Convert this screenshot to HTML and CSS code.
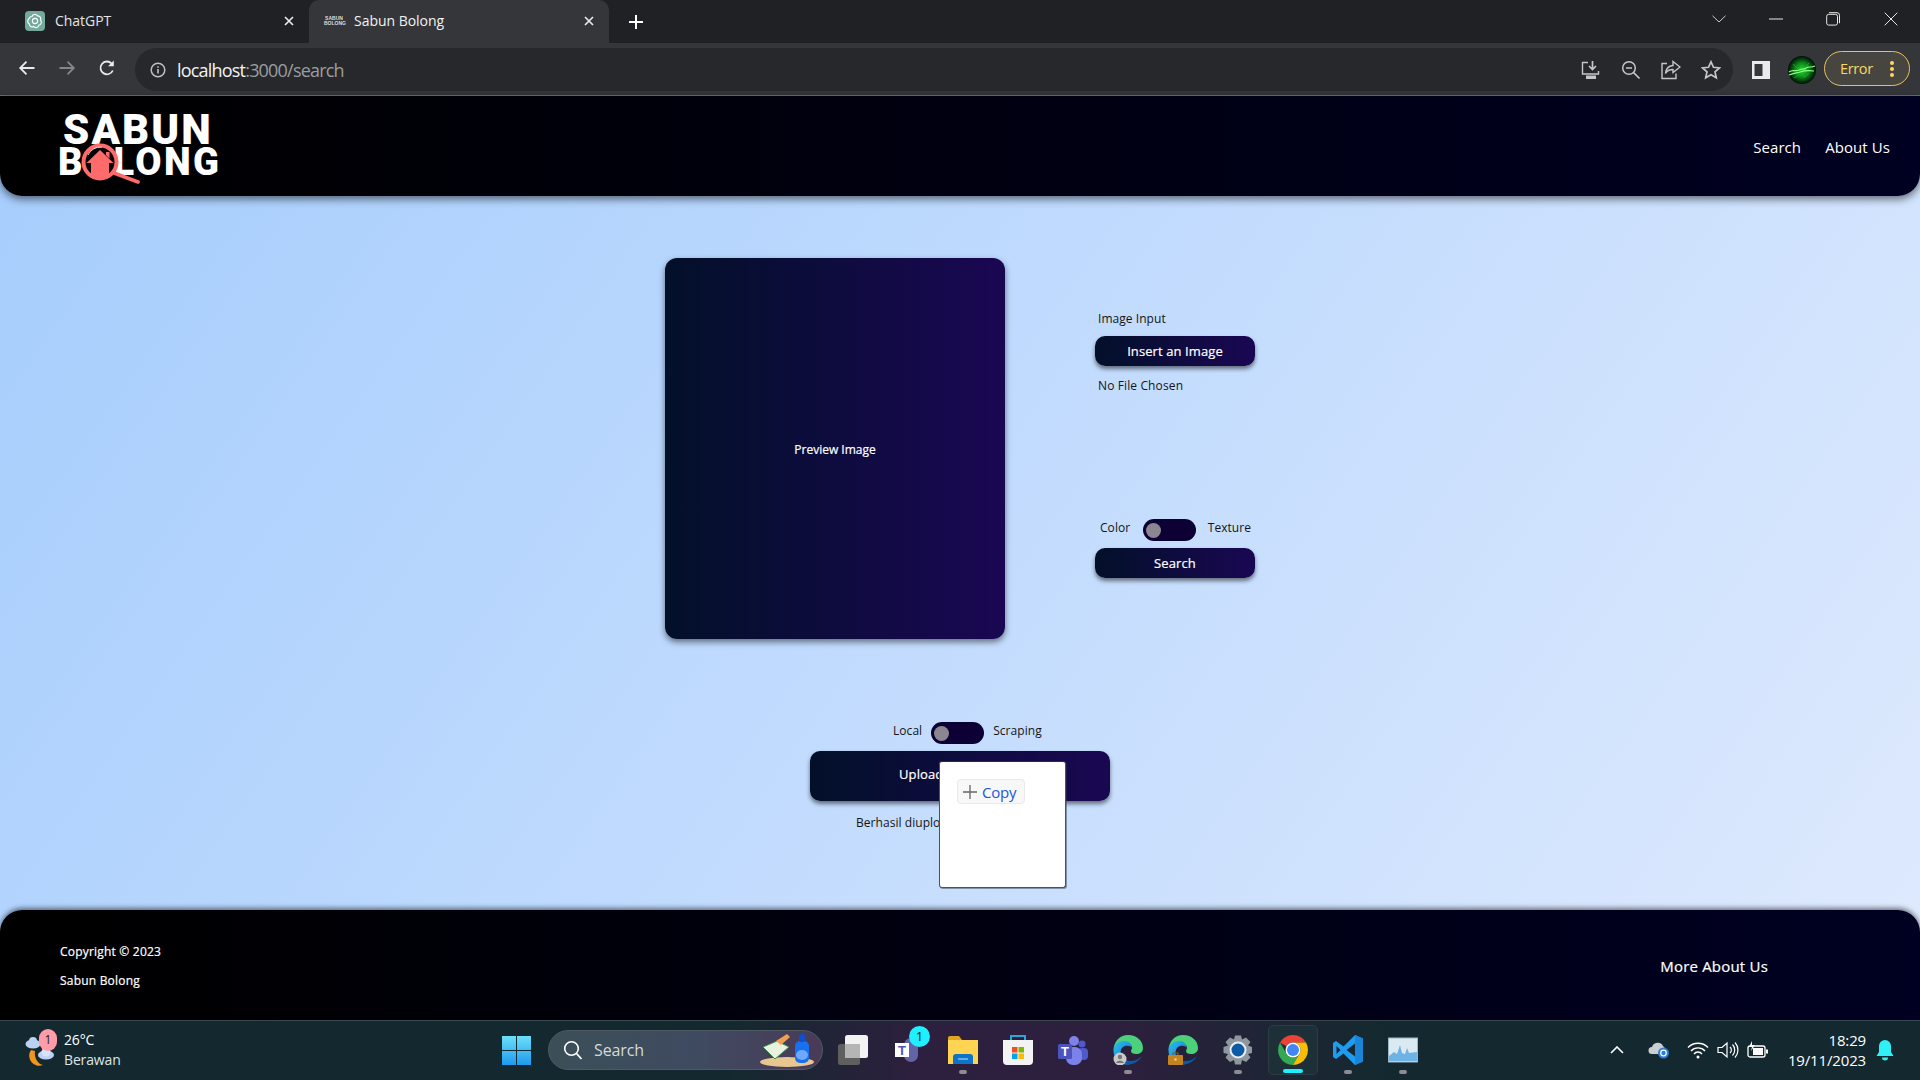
FILE: index.html
```html
<!DOCTYPE html>
<html lang="en">
<head>
<meta charset="utf-8">
<title>Sabun Bolong</title>
<link rel="stylesheet" href="styles.css">
</head>
<body>
<div class="tabstrip">
  <div class="tab">
    <svg class="fav" viewBox="0 0 20 20"><rect width="20" height="20" rx="4" fill="#74aa9c"/><g fill="none" stroke="#fff" stroke-width="1.1"><circle cx="10" cy="10" r="2.6"/><path d="M7 5.5a3 3 0 0 1 5.5-.6 3 3 0 0 1 3 4.3 3 3 0 0 1-1.5 5 3 3 0 0 1-5.3 1.2 3 3 0 0 1-4.5-2.600 3 3 0 0 1-.2-5 3 3 0 0 1 3-2.300z"/></g></svg>
    <span class="tab-title">ChatGPT</span>
    <svg class="tab-x" viewBox="0 0 10 10"><path d="M1 1l8 8M9 1l-8 8" stroke="#e8eaed" stroke-width="1.700"/></svg>
  </div>
  <div class="tab tab-active">
    <span class="mini-logo">SABUN BOLONG</span>
    <span class="tab-title">Sabun Bolong</span>
    <svg class="tab-x" viewBox="0 0 10 10"><path d="M1 1l8 8M9 1l-8 8" stroke="#e8eaed" stroke-width="1.700"/></svg>
  </div>
  <svg class="tab-plus" viewBox="0 0 16 16"><path d="M8 1v14M1 8h14" stroke="#fff" stroke-width="2"/></svg>
  <div class="win-controls">
    <svg class="win-chev" viewBox="0 0 14 8"><path d="M.5.8L7 7l6.500-6.200" fill="none" stroke="#c8c9cb" stroke-width="1"/></svg>
    <svg class="win-min" viewBox="0 0 14 2"><path d="M0 1h14" stroke="#e8e8e8" stroke-width="1"/></svg>
    <svg class="win-max" viewBox="0 0 14 14"><rect x=".7" y="2.300" width="10.800" height="10.800" rx="2" fill="none" stroke="#e8e8e8" stroke-width="1"/><path d="M3 .7h8a2.500 2.500 0 0 1 2.500 2.500v8" fill="none" stroke="#e8e8e8" stroke-width="1"/></svg>
    <svg class="win-close" viewBox="0 0 14 14"><path d="M.7.7l12.600 12.600M13.300.7L.7 13.300" stroke="#e8e8e8" stroke-width="1"/></svg>
  </div>
</div>
<div class="toolbar">
  <svg class="nav-ic" viewBox="0 0 18 18"><path d="M16.500 9H2.500M8.500 2.700L2.200 9l6.300 6.300" fill="none" stroke="#e8eaed" stroke-width="1.800"/></svg>
  <svg class="nav-ic" viewBox="0 0 18 18"><path d="M1.500 9h14M9.500 2.700L15.800 9l-6.300 6.300" fill="none" stroke="#84868a" stroke-width="1.800"/></svg>
  <svg class="nav-ic" viewBox="0 0 18 18"><path d="M14.800 11.500A6.400 6.400 0 1 1 13.500 4.400" fill="none" stroke="#e8eaed" stroke-width="1.800"/><path d="M15.800 1.500v5.700h-5.700z" fill="#e8eaed"/></svg>
  <div class="omnibox">
    <svg class="info" viewBox="0 0 16 16"><circle cx="8" cy="8" r="6.800" fill="none" stroke="#bdc1c6" stroke-width="1.500"/><path d="M8 7v4.500M8 4.300v1.500" stroke="#bdc1c6" stroke-width="1.600"/></svg>
    <span class="url"><span class="url-host">localhost</span>:3000/search</span>
    <div class="omni-icons">
      <svg class="omni-ic" viewBox="0 0 20 20"><path d="M7 2.500H1.500v11.500h16v-3" fill="none" stroke="#c4c7c9" stroke-width="1.400"/><path d="M11.500 1v7.500M8 6l3.500 3.500L15 6" fill="none" stroke="#c4c7c9" stroke-width="1.700"/><path d="M5 15.500h10V19H5z" fill="#c4c7c9"/></svg>
      <svg class="omni-ic" viewBox="0 0 20 20"><circle cx="8" cy="8" r="6.300" fill="none" stroke="#c4c7c9" stroke-width="1.500"/><path d="M5 8h6M12.500 12.500l6 6" stroke="#c4c7c9" stroke-width="1.700"/></svg>
      <svg class="omni-ic" viewBox="0 0 20 20"><path d="M6 3.500H1v15h14v-5" fill="none" stroke="#c4c7c9" stroke-width="1.400"/><path d="M12 1.500l7 5.500-7 5.500V9.500c-3.500 0-6 1-7.500 4 .3-4.500 3-7.500 7.500-8z" fill="none" stroke="#c4c7c9" stroke-width="1.400"/></svg>
      <svg class="omni-ic" viewBox="0 0 20 20"><path d="M10 1.800l2.500 5.500 6 .6-4.500 4 1.300 5.900L10 14.800l-5.300 3 1.300-5.900-4.500-4 6-.6z" fill="none" stroke="#c4c7c9" stroke-width="1.700"/></svg>
    </div>
  </div>
  <svg class="panel-ic" viewBox="0 0 18 18"><rect width="18" height="18" fill="#e8eaed"/><rect x="2.500" y="3" width="8" height="12" fill="#35363a"/></svg>
  <svg class="avatar" viewBox="0 0 28 28"><defs><radialGradient id="ag"><stop offset="0" stop-color="#2bd634"/><stop offset=".5" stop-color="#0d8a18"/><stop offset=".85" stop-color="#04300c"/><stop offset="1" stop-color="#011006"/></radialGradient></defs><circle cx="14" cy="14" r="14" fill="url(#ag)"/><path d="M1 16c4-3 6 0 10-2s5 0 7-2 5 0 9-2M1 19c5-2 8-2 11-3s7-2 14-1" fill="none" stroke="#8dff86" stroke-width="1.200"/><path d="M5 8l5 5 4-4 3 3 4-5M6 22l6-4 5 3 4-4" fill="none" stroke="#1fae2a" stroke-width=".8"/></svg>
  <div class="error-pill"><span>Error</span><svg class="error-dots" viewBox="0 0 4 16"><circle cx="2" cy="2" r="2" fill="#fdd663"/><circle cx="2" cy="8" r="2" fill="#fdd663"/><circle cx="2" cy="14" r="2" fill="#fdd663"/></svg></div>
</div>
<div class="page">
  <header class="site-header">
    <div class="logo">SABUN BOLONG
      <svg class="logo-mag" viewBox="0 0 60 42"><path d="M33 31l24 9" stroke="#ff6b6b" stroke-width="3.600" stroke-linecap="round"/><circle cx="19" cy="20" r="16.500" fill="#050505" stroke="#ff6b6b" stroke-width="4"/><path d="M19 8L5.500 21H10v14h18V21h4.500z" fill="#ff6b6b"/><path d="M25 10h3.500v6.500L25 13z" fill="#ff6b6b"/><path d="M7 13a14 14 0 0 1 14-8" fill="none" stroke="#fff" stroke-width=".8"/></svg>
    </div>
    <nav class="site-nav"><a>Search</a><a>About Us</a></nav>
  </header>
  <main class="content">
    <section class="search-row">
      <div class="preview"><span class="preview-text">Preview Image</span></div>
      <div class="controls">
        <div class="ctrl-group">
          <span class="label label-in">Image Input</span>
          <button class="btn">Insert an Image</button>
          <span class="label label-file">No File Chosen</span>
        </div>
        <div class="ctrl-group">
          <div class="toggle-row toggle-row-search"><span class="label">Color</span><span class="toggle"><span class="knob"></span></span><span class="label">Texture</span></div>
          <button class="btn">Search</button>
        </div>
      </div>
    </section>
    <section class="upload">
      <div class="toggle-row toggle-row-upload"><span class="label">Local</span><span class="toggle"><span class="knob"></span></span><span class="label">Scraping</span></div>
      <button class="btn btn-wide">Upload to Database</button>
      <span class="label upload-status">Berhasil diupload ke database</span>
      <div class="popup">
        <div class="copy-chip"><svg class="copy-plus" viewBox="0 0 14 14"><path d="M7 0v14M0 7h14" stroke="#666" stroke-width="1.300"/></svg><span>Copy</span></div>
      </div>
    </section>
  </main>
  <footer class="site-footer">
    <div class="foot-left"><span>Copyright © 2023</span><span>Sabun Bolong</span></div>
    <a class="foot-link">More About Us</a>
  </footer>
</div>
<div class="taskbar">
  <div class="tb-left">
    <div class="weather">
      <svg class="weather-ic" viewBox="0 0 30 30"><path d="M6 14a10 10 0 0 0 12 15c-5-1-9-7-8-14z" fill="#f0961e"/><ellipse cx="8" cy="8" rx="7.500" ry="4.500" fill="#bcd2f2"/><circle cx="8" cy="5" r="4" fill="#bcd2f2"/><ellipse cx="21" cy="19" rx="8" ry="4.500" fill="#bcd2f2"/><circle cx="21" cy="16" r="4.500" fill="#d7e4f8"/></svg>
      <span class="weather-badge">1</span>
      <div class="weather-text"><span class="w-temp">26°C</span><span>Berawan</span></div>
    </div>
  </div>
  <div class="tb-center">
    <div class="tb-item tb-win">
      <svg class="ic-29" viewBox="0 0 29 29"><defs><linearGradient id="wg" x1="0" y1="0" x2="0" y2="1"><stop offset="0" stop-color="#6ce0f8"/><stop offset="1" stop-color="#1d9af0"/></linearGradient></defs><path d="M0 0h14v14H0zM15 0h14v14H15zM0 15h14v14H0zM15 15h14v14H15z" fill="url(#wg)"/></svg>
    </div>
    <div class="tb-search">
      <svg class="q-ic" viewBox="0 0 20 20"><circle cx="8.500" cy="8.500" r="6.800" fill="none" stroke="#fff" stroke-width="1.600"/><path d="M13.500 13.500l5 5.500" stroke="#fff" stroke-width="1.800"/></svg>
      <span class="q-text">Search</span>
      <svg class="q-art" viewBox="0 0 56 34"><ellipse cx="28" cy="29" rx="27" ry="5" fill="#e8c690"/><path d="M4 14l14-6 12 6-14 12z" fill="#e8f2dc" stroke="#3d8a55"/><path d="M17 8l11-7 3 3-9 8z" fill="#f0a050"/><rect x="36" y="8" width="14" height="22" rx="5" fill="#1670f0"/><rect x="40" y="1" width="6" height="8" rx="2" fill="#0f50c8"/><ellipse cx="43" cy="22" rx="6" ry="5" fill="#6fa8ff"/></svg>
    </div>
    <div class="tb-item">
      <svg class="ic-30" viewBox="0 0 30 30"><rect x="0" y="9" width="22" height="21" rx="2.500" fill="#5f5f5f"/><rect x="7" y="0" width="23" height="23" rx="2.500" fill="#f2f2f2"/><rect x="7" y="9" width="15" height="14" fill="#b5b5b5"/></svg>
    </div>
    <div class="tb-item">
      <svg class="ic-30" viewBox="0 0 30 30"><rect x="11" y="3" width="14" height="24" rx="7" fill="#6264a7"/><rect x="2" y="8" width="14" height="14" fill="#fff"/><text class="t-letter" x="9" y="19.500" text-anchor="middle">T</text></svg>
      <span class="tb-count">1</span>
    </div>
    <div class="tb-item has-dot">
      <svg class="ic-30" viewBox="0 0 30 30"><path d="M0 3a2 2 0 0 1 2-2h9l3 4h-14z" fill="#e0a422"/><path d="M0 5h30v24H0z" fill="#ffd452"/><path d="M5 22a3 3 0 0 1 3-3h14a3 3 0 0 1 3 3v7H5z" fill="#0f74c8"/><path d="M10 24h10" stroke="#9fd0f5" stroke-width="1.200"/></svg>
    </div>
    <div class="tb-item">
      <svg class="ic-30" viewBox="0 0 30 30"><path d="M8 6V1h14v5" fill="none" stroke="#22a9e0" stroke-width="2"/><path d="M0 5h30v21a4 4 0 0 1-4 4H4a4 4 0 0 1-4-4z" fill="#f3f3f3"/><rect x="9" y="12" width="5.500" height="5.500" fill="#f25022"/><rect x="15.500" y="12" width="5.500" height="5.500" fill="#7fba00"/><rect x="9" y="18.500" width="5.500" height="5.500" fill="#00a4ef"/><rect x="15.500" y="18.500" width="5.500" height="5.500" fill="#ffb900"/></svg>
    </div>
    <div class="tb-item">
      <svg class="ic-30" viewBox="0 0 30 30"><circle cx="24" cy="9" r="3.500" fill="#5059c9"/><rect x="20" y="13" width="10" height="12" rx="4" fill="#5059c9"/><circle cx="16" cy="6" r="5" fill="#7b83eb"/><rect x="8" y="12" width="16" height="18" rx="7" fill="#7b83eb"/><rect x="0" y="9" width="14" height="15" rx="1.500" fill="#4b53bc"/><text class="t-letter t-letter-w" x="7" y="21" text-anchor="middle">T</text></svg>
    </div>
    <div class="tb-item has-dot">
      <svg class="ic-30" viewBox="0 0 30 30"><defs><linearGradient id="eg" x1="0" y1="0" x2="1" y2="1"><stop offset="0" stop-color="#28c0e8"/><stop offset=".6" stop-color="#1f8fe0"/><stop offset="1" stop-color="#0b5aa8"/></linearGradient></defs><path d="M15 0c9 0 15 6 15 13 0 4-3 6-7 6-3 0-5-1-5-3 0-1 1-2 1-3 0-3-3-6-8-6C6 7 2 11 .5 14 1.500 6 7 0 15 0z" fill="#4cd07a"/><path d="M.5 14C2 9 6 6 11 6c5 0 7.500 3 7.500 6-5-3-11-1-11 6 0 5 4 10 10 11.500C7 31 0 24 .5 14z" fill="url(#eg)"/><path d="M29 21c-3 5-8 9-14 8-4-1-7-5-7-10 0 5 5 7 10 7 4 0 8-2 11-5z" fill="#0c59a4"/><circle cx="7" cy="24" r="6.500" fill="#c9c9c9"/><circle cx="7" cy="22" r="2.200" fill="#777"/><path d="M2.800 28a4.500 4 0 0 1 8.400 0z" fill="#777"/></svg>
    </div>
    <div class="tb-item">
      <svg class="ic-30" viewBox="0 0 30 30"><path d="M15 0c9 0 15 6 15 13 0 4-3 6-7 6-3 0-5-1-5-3 0-1 1-2 1-3 0-3-3-6-8-6C6 7 2 11 .5 14 1.500 6 7 0 15 0z" fill="#4cd07a"/><path d="M.5 14C2 9 6 6 11 6c5 0 7.500 3 7.500 6-5-3-11-1-11 6 0 5 4 10 10 11.500C7 31 0 24 .5 14z" fill="url(#eg)"/><path d="M29 21c-3 5-8 9-14 8-4-1-7-5-7-10 0 5 5 7 10 7 4 0 8-2 11-5z" fill="#0c59a4"/><rect x="0" y="20" width="15" height="10" rx="1" fill="#c68420"/><path d="M5 20v-2h5v2" fill="none" stroke="#8a5a15" stroke-width="1.200"/><rect x="6.500" y="23.500" width="2" height="2" fill="#ffe082"/></svg>
    </div>
    <div class="tb-item has-dot">
      <svg class="ic-30" viewBox="0 0 30 30"><path d="M12 .5h6l1 4 4-2 4.500 4.500-2.500 3.500 4 1.500v6l-4 1 2.500 3.500L23 27l-4-2-1 4.500h-6l-1-4.500-4 2L2.500 22.500 5 19l-4.500-1v-6L5 10.500 2.500 7 7 2.500l4 2z" fill="#8f979e"/><circle cx="15" cy="15" r="7.500" fill="#0e5aa6" stroke="#e8edf2" stroke-width="2"/></svg>
    </div>
    <div class="tb-item tb-active">
      <svg class="ic-30" viewBox="4 4 40 40"><path d="M24 4A20 20 0 0 1 41.320 14H24a10 10 0 0 0-8.660 5L6.680 14A20 20 0 0 1 24 4z" fill="#ea4335"/><path d="M6.680 14A20 20 0 0 0 24 44L32.660 29A10 10 0 0 1 15.340 29z" fill="#34a853"/><path d="M41.320 14H24a10 10 0 0 1 8.660 15L24 44A20 20 0 0 0 41.320 14z" fill="#fbbc04"/><circle cx="24" cy="24" r="10" fill="#fff"/><circle cx="24" cy="24" r="8" fill="#4285f4"/></svg>
      <span class="tb-bar"></span>
    </div>
    <div class="tb-item has-dot">
      <svg class="ic-30" viewBox="0 0 30 30"><path d="M22 0l-11.500 11.500L3 6 0 8v14l3 2 7.500-5.500L22 30l8-3.500v-23zM22 8.500v13L13.500 15zM3.500 11l4 4-4 4z" fill="#1f9cf0" fill-rule="evenodd"/><path d="M22 0l8 3.500v23L22 30z" fill="#1a85d8"/></svg>
    </div>
    <div class="tb-item has-dot">
      <svg class="ic-30" viewBox="0 0 30 30"><rect x=".5" y="3" width="29" height="24" fill="#dbe9f2" stroke="#9db4c2"/><path d="M1 21l5-4 3 2 3-9 2 8 3 1 2-6 2 5 8-1v9H1z" fill="#6db3e6"/></svg>
    </div>
  </div>
  <div class="tb-right">
    <svg class="tray-chev" viewBox="0 0 14 8"><path d="M1 7l6-6 6 6" fill="none" stroke="#fff" stroke-width="1.600"/></svg>
    <svg class="tray-ic" viewBox="0 0 22 18"><path d="M4 13a3.500 3.500 0 0 1 0-7 6 6 0 0 1 11-1 4 4 0 0 1 2 4l-5 4z" fill="#c9ced1"/><circle cx="15.500" cy="12" r="5.500" fill="#2b7fd8"/><circle cx="15.500" cy="12" r="2.800" fill="none" stroke="#fff" stroke-width="1.200"/></svg>
    <svg class="tray-ic" viewBox="0 0 22 18"><path d="M1 6.500a14 14 0 0 1 20 0M4 10a9.500 9.500 0 0 1 14 0M7 13a5 5 0 0 1 8 0" fill="none" stroke="#fff" stroke-width="1.400"/><circle cx="11" cy="16" r="1.500" fill="#fff"/></svg>
    <svg class="tray-ic" viewBox="0 0 22 18"><path d="M1 6.500h4L10 2v14l-5-4.500H1z" fill="none" stroke="#fff" stroke-width="1.200"/><path d="M13 6a4 4 0 0 1 0 6M15.500 3.500a8 8 0 0 1 0 11M18 1.500a11 11 0 0 1 0 15" fill="none" stroke="#fff" stroke-width="1.200"/></svg>
    <svg class="tray-ic" viewBox="0 0 22 18"><rect x="1" y="5" width="17" height="11" rx="2" fill="none" stroke="#fff" stroke-width="1.300"/><rect x="6" y="7" width="10" height="7" fill="#fff"/><path d="M19 8.500h2v4h-2z" fill="#fff"/><path d="M5 0L2 6h3l-1 4 4-6H5z" fill="#fff"/></svg>
    <div class="clock"><span>18:29</span><span>19/11/2023</span></div>
    <svg class="bell" viewBox="0 0 18 22"><path d="M9 1a6 6 0 0 1 6 6v6l2.500 4H.5L3 13V7a6 6 0 0 1 6-6z" fill="#2ff0f5"/><path d="M6 18.500a3 3 0 0 0 6 0z" fill="#2ff0f5"/></svg>
  </div>
</div>
</body>
</html>
```

FILE: styles.css
```css
* { box-sizing: border-box; }
html, body { margin: 0; padding: 0; }
body {
  width: 1920px;
  height: 1080px;
  overflow: hidden;
  display: flex;
  flex-direction: column;
  font-family: "Open Sans", "Noto Sans", sans-serif;
  color: #111;
  background: #202124;
}
svg { display: block; flex: none; }

/* browser tabs */
.tabstrip {
  height: 43px;
  flex: none;
  display: flex;
  align-items: center;
  background: #202124;
  padding-left: 9px;
}
.tab {
  width: 300px;
  height: 43px;
  display: flex;
  align-items: center;
  padding: 0 15px 2px 16px;
  color: #e3e4e6;
  font-size: 14px;
  letter-spacing: -0.03px;
}
.tab-active {
  background: #35363a;
  border-radius: 10px 10px 0 0;
  color: #f1f2f3;
  padding-left: 15px;
}
.fav { width: 20px; height: 20px; }
.mini-logo {
  width: 20px;
  text-align: center;
  font-family: "Liberation Sans", sans-serif;
  font-size: 5px;
  font-weight: 700;
  line-height: 5px;
  letter-spacing: 0;
  color: #ddd;
}
.tab-title { margin-left: 10px; flex: 1; }
.tab-x { width: 10px; height: 10px; }
.tab-plus { width: 16px; height: 16px; margin-left: 19px; }
.win-controls {
  margin-left: auto;
  display: flex;
  align-items: center;
  height: 38px;
  align-self: flex-start;
  padding-right: 22px;
}
.win-chev { width: 14px; height: 8px; margin-right: 43px; }
.win-min { width: 14px; height: 2px; margin-right: 43px; }
.win-max { width: 14px; height: 14px; margin-right: 44px; }
.win-close { width: 14px; height: 14px; }

/* browser toolbar */
.toolbar {
  height: 53px;
  flex: none;
  display: flex;
  align-items: flex-start;
  background: #35363a;
  border-bottom: 1px solid #6e6f72;
  padding: 5px 10px 0 18px;
}
.nav-ic { width: 18px; height: 18px; margin: 11px 22px 0 0; }
.nav-ic:nth-child(3) { margin-right: 19px; }
.omnibox {
  width: 1598px;
  height: 43px;
  border-radius: 22px;
  background: #27282b;
  display: flex;
  align-items: center;
  padding: 0 12px 0 15px;
}
.info { width: 16px; height: 16px; }
.url {
  margin-left: 11px;
  font-size: 18px;
  letter-spacing: -0.8px;
  color: #9b9da0;
}
.url-host { color: #f1f3f4; }
.omni-icons { margin-left: auto; display: flex; gap: 20px; }
.omni-ic { width: 20px; height: 20px; }
.panel-ic { width: 18px; height: 18px; margin: 13px 0 0 19px; }
.avatar { width: 28px; height: 28px; margin: 8px 0 0 18px; }
.error-pill {
  width: 86px;
  height: 35px;
  margin: 3px 0 0 8px;
  border: 1.500px solid #e8c15a;
  border-radius: 18px;
  background: #47453f;
  display: flex;
  align-items: center;
  padding: 0 15px 0 15px;
  color: #fdd663;
  font-size: 14.500px;
  letter-spacing: -0.35px;
}
.error-dots { width: 4px; height: 16px; margin-left: auto; }

/* page */
.page {
  flex: 1;
  min-height: 0;
  display: flex;
  flex-direction: column;
  background: linear-gradient(125deg, #a5cdfc 0%, #bfdafe 45%, #dfeafd 100%);
}
.site-header {
  height: 100px;
  flex: none;
  display: flex;
  align-items: center;
  justify-content: space-between;
  background: linear-gradient(90deg, #000 0%, #000022 100%);
  border-radius: 0 0 22px 22px;
  box-shadow: 0 3px 8px rgba(0, 0, 0, .55);
  padding: 0 30px 0 58px;
  position: relative;
}
.logo {
  position: relative;
  width: 170px;
  height: 67px;
  color: #fff;
  font-family: Roboto, sans-serif;
  font-weight: 900;
  font-size: 38px;
  line-height: 33.500px;
  letter-spacing: 2.400px;
  text-indent: 5px;
}
.logo::first-line { font-size: 42px; letter-spacing: 2.100px; }
.logo-mag {
  position: absolute;
  left: 23px;
  top: 29px;
  width: 60px;
  height: 42px;
}
.site-nav {
  display: flex;
  gap: 24px;
  margin-top: 1px;
  color: #fff;
  font-size: 15px;
  letter-spacing: 0.08px;
}

.content {
  flex: 1;
  min-height: 0;
  display: flex;
  flex-direction: column;
  align-items: center;
  padding-top: 62px;
}
.search-row { display: flex; gap: 90px; }
.preview {
  width: 340px;
  height: 381px;
  border-radius: 12px;
  background: linear-gradient(90deg, #021029 0%, #1a0753 100%);
  box-shadow: 0 3px 6px rgba(0, 0, 0, .5);
  display: flex;
  align-items: center;
  justify-content: center;
  color: #fff;
  font-size: 12px;
  font-weight: 500;
  -webkit-text-stroke: .2px #fff;
}
.preview-text { margin-top: 2px; }
.controls {
  width: 160px;
  height: 381px;
  display: flex;
  flex-direction: column;
  justify-content: space-between;
  padding: 52px 0 61px;
}
.ctrl-group { display: flex; flex-direction: column; }
.label { font-size: 12px; line-height: 17px; letter-spacing: 0.05px; color: #151515; white-space: nowrap; }
.label-in { margin: 0 0 9px 3px; }
.label-file { margin: 11px 0 0 3px; letter-spacing: 0.12px; }
.btn {
  height: 30px;
  width: 160px;
  border: 0;
  padding: 0;
  border-radius: 10px;
  background: linear-gradient(90deg, #021029 0%, #1a0753 100%);
  box-shadow: 0 3px 4px rgba(0, 0, 0, .5);
  color: #fff;
  font-family: inherit;
  font-size: 13px;
  font-weight: 500;
  letter-spacing: 0.1px;
  -webkit-text-stroke: .2px #fff;
}
.btn-wide { width: 300px; height: 50px; border-radius: 10px; padding-bottom: 4px; }
.toggle-row { display: flex; align-items: center; gap: 9px; }
.toggle-row .label { margin-top: -5px; }
.toggle-row-search { justify-content: space-between; padding: 0 4px 0 5px; margin-bottom: 7px; gap: 0; }
.toggle-row-search .toggle { margin-left: 2px; }
.toggle-row-upload { padding-left: 83px; margin-bottom: 7px; gap: 9px; }
.toggle {
  width: 53px;
  height: 22px;
  border-radius: 11px;
  background: #0c0034;
  display: flex;
  align-items: center;
  padding-left: 3px;
}
.knob { width: 15px; height: 15px; border-radius: 50%; background: #8b8690; }

.upload {
  margin-top: 83px;
  width: 300px;
  display: flex;
  flex-direction: column;
  position: relative;
}
.upload-status { margin: 13px 0 0 46px; }
.popup {
  position: absolute;
  left: 129px;
  top: 39px;
  width: 127px;
  height: 127px;
  background: #fff;
  border-radius: 3px;
  border: 1px solid #4a5160;
  border-top-color: #2a2a44;
  box-shadow: 1px 1px 0 rgba(40, 50, 70, .45);
  padding: 17px 0 0 17px;
}
.copy-chip {
  width: 68px;
  height: 25px;
  border: 1px solid #e9e9eb;
  border-radius: 4px;
  background: #f8f8f9;
  display: flex;
  align-items: center;
  padding-left: 5px;
  color: #2154e0;
  font-size: 15px;
  letter-spacing: -0.2px;
}
.copy-plus { width: 14px; height: 14px; margin-right: 5px; }

.site-footer {
  height: 110px;
  flex: none;
  display: flex;
  align-items: center;
  justify-content: space-between;
  background: linear-gradient(90deg, #000 0%, #000022 100%);
  border-radius: 22px 22px 0 0;
  box-shadow: 0 -2px 5px rgba(0, 0, 0, .5);
  color: #fff;
  padding: 0 152px 0 60px;
  -webkit-text-stroke: .2px #fff;
}
.foot-left {
  display: flex;
  flex-direction: column;
  gap: 12px;
  font-size: 12px;
  line-height: 17px;
  font-weight: 500;
  letter-spacing: 0.2px;
  margin-top: 2px;
}
.foot-link { font-size: 15px; font-weight: 500; letter-spacing: 0.2px; margin-top: 2px; }

/* taskbar */
.taskbar {
  height: 60px;
  flex: none;
  display: grid;
  grid-template-columns: 491px auto 1fr;
  border-top: 1px solid #39474e;
  background: linear-gradient(90deg, #14292f 0%, #14292f 38%, #2d1f3e 48%, #2d1f3e 58%, #14292f 72%, #14292f 100%);
  color: #fff;
}
.tb-left { padding-left: 25px; display: flex; align-items: center; }
.weather { display: flex; align-items: center; position: relative; }
.weather-ic { width: 30px; height: 30px; }
.weather-badge {
  position: absolute;
  left: 14px;
  top: -3px;
  width: 18px;
  height: 22px;
  border-radius: 11px;
  background: #ff9ca8;
  color: #222;
  font-size: 12px;
  line-height: 22px;
  text-align: center;
}
.weather-text {
  margin-left: 9px;
  margin-top: -2px;
  display: flex;
  flex-direction: column;
  font-size: 14px;
  line-height: 20px;
  letter-spacing: -0.15px;
  color: #dfe4e6;
}
.w-temp { color: #fff; }
.tb-center { display: flex; align-items: center; gap: 5px; margin-top: -1px; }
.tb-item {
  position: relative;
  width: 50px;
  height: 50px;
  border-radius: 5px;
  display: flex;
  align-items: center;
  justify-content: center;
}
.tb-win { margin-right: 2px; }
.ic-29 { width: 29px; height: 29px; }
.ic-30 { width: 30px; height: 30px; }
.t-letter { font-family: "Liberation Sans", sans-serif; font-size: 13px; font-weight: 700; fill: #4b53bc; }
.t-letter-w { fill: #fff; }
.tb-count {
  position: absolute;
  left: 26px;
  top: 1px;
  width: 21px;
  height: 21px;
  border-radius: 50%;
  background: #1ef0ff;
  color: #111;
  font-size: 13px;
  line-height: 21px;
  text-align: center;
}
.has-dot::after {
  content: "";
  position: absolute;
  left: 21px;
  bottom: 1px;
  width: 8px;
  height: 4px;
  border-radius: 2px;
  background: #8b8d92;
}
.tb-active { background: #1d3038; border: 1px solid #2a3d45; }
.tb-bar {
  position: absolute;
  left: 14px;
  bottom: 1px;
  width: 20px;
  height: 4px;
  border-radius: 2px;
  background: #1ef0ff;
}
.tb-search {
  width: 275px;
  height: 40px;
  border-radius: 20px;
  background: linear-gradient(90deg, #3b4f58 0%, #3f4a60 55%, #4a3a58 100%);
  border: 1px solid #4d5a62;
  display: flex;
  align-items: center;
  padding: 0 7px 0 14px;
  position: relative;
}
.q-ic { width: 20px; height: 20px; }
.q-text { margin-left: 11px; font-size: 16px; letter-spacing: -0.1px; color: #d4d9db; }
.q-art { width: 56px; height: 34px; margin-left: auto; }
.tb-right {
  display: flex;
  align-items: center;
  justify-content: flex-end;
  padding-right: 26px;
  margin-top: -1px;
}
.tray-chev { width: 14px; height: 8px; margin-right: 24px; }
.tray-ic { width: 22px; height: 18px; margin-right: 8px; }
.tray-ic:nth-child(2) { margin-right: 17px; }
.clock {
  display: flex;
  flex-direction: column;
  align-items: flex-end;
  margin-left: 11px;
  font-size: 15px;
  line-height: 20px;
  letter-spacing: -0.15px;
}
.bell { width: 18px; height: 22px; margin-left: 10px; }
```
